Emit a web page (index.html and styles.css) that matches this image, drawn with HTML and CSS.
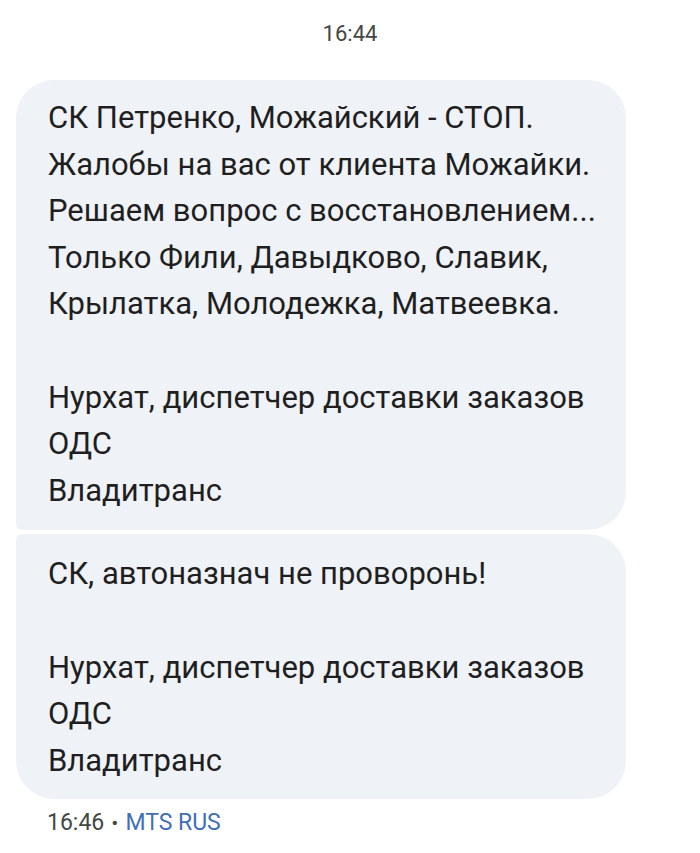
FILE: index.html
```html
<!DOCTYPE html>
<html lang="ru">
<head>
<meta charset="utf-8">
<link rel="stylesheet" href="styles.css">
</head>
<body>
<div class="thread">
  <div class="stamp">16:44</div>
  <div class="group">
    <div class="bubble first">СК Петренко, Можайский - СТОП.<br>Жалобы на вас от клиента Можайки.<br>Решаем вопрос с восстановлением...<br>Только Фили, Давыдково, Славик,<br>Крылатка, Молодежка, Матвеевка.<br><br>Нурхат, диспетчер доставки заказов<br>ОДС<br>Владитранс</div>
    <div class="bubble last">СК, автоназнач не проворонь!<br><br>Нурхат, диспетчер доставки заказов<br>ОДС<br>Владитранс</div>
  </div>
  <div class="meta"><span class="meta-time">16:46</span><span class="dot">•</span><span class="sim">MTS RUS</span></div>
</div>
</body>
</html>
```
FILE: styles.css
```css
html, body {
  margin: 0;
  padding: 0;
  background: #ffffff;
}
body {
  font-family: Roboto, "Noto Sans", sans-serif;
  color: #1f1f1f;
}
.thread {
  display: flex;
  flex-direction: column;
  padding: 21px 0 0 0;
}
.stamp {
  width: 700px;
  text-align: center;
  font-size: 22px;
  line-height: 26px;
  color: #444746;
  margin-bottom: 33px;
}
.group {
  display: flex;
  flex-direction: column;
  gap: 4px;
  margin-left: 16px;
}
.bubble {
  width: 610px;
  box-sizing: border-box;
  background: #eff2f7;
  padding: 15px 20px 16px 32px;
  font-size: 31px;
  line-height: 46.6px;
  white-space: nowrap;
}
.bubble.first {
  border-radius: 38px 38px 38px 6px;
}
.bubble.last {
  border-radius: 6px 38px 38px 38px;
  padding-top: 17px;
  padding-bottom: 15px;
}
.meta {
  margin-top: 10px;
  padding-left: 47px;
  font-size: 23px;
  line-height: 27px;
  color: #444746;
}
.dot {
  font-size: 21px;
  margin: 0 7px;
}
.sim {
  color: #3f6fb6;
}
```
